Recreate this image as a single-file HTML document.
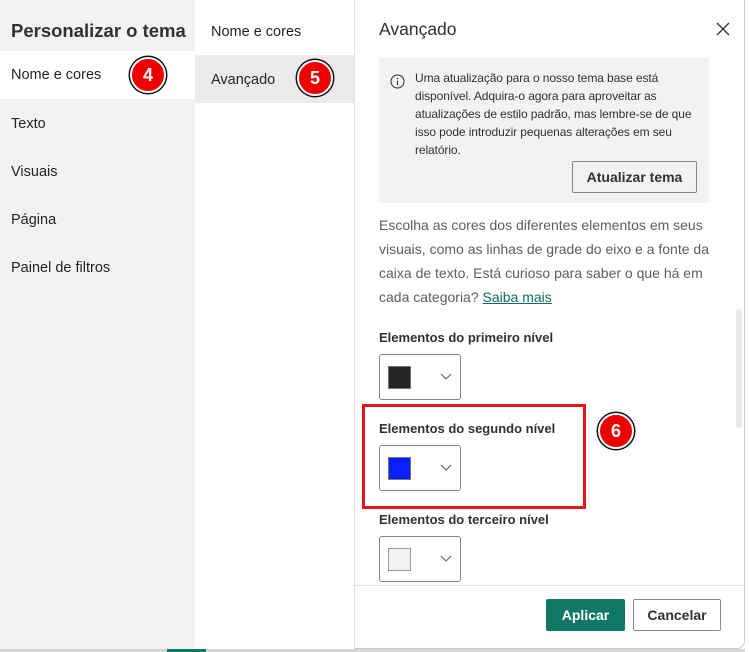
<!DOCTYPE html>
<html><head><meta charset="utf-8"><style>
*{margin:0;padding:0;box-sizing:border-box}
body{width:750px;height:652px;overflow:hidden;background:#fff;font-family:"Liberation Sans",sans-serif;color:#252423;position:relative}
.a{position:absolute;white-space:nowrap}
.badge{position:absolute;width:36px;height:36px;border-radius:50%;background:#e00;border:2px solid #fff;box-shadow:0 0 0 1.5px #111;color:#fff;font-weight:bold;font-size:18px;text-align:center;line-height:32px}
.pick{position:absolute;left:379px;width:82px;height:46px;border:1px solid #8a8886;border-radius:3px;background:#fff}
.pick .sw{position:absolute;left:8px;top:11px;width:23px;height:23px;border:1px solid #777}
.pick svg{position:absolute;left:60px;top:18px}
.lbl{position:absolute;left:379px;font-size:13px;font-weight:bold;color:#323130}
.nav{font-size:14.5px}
</style></head><body>
<div class="a" style="left:0;top:0;width:195px;height:649px;background:#f3f2f1"></div>
<div class="a" style="left:0;top:51px;width:195px;height:48px;background:#fff"></div>
<div class="a" style="left:11px;top:20px;font-size:18.5px;font-weight:bold;color:#323130">Personalizar o tema</div>
<div class="a nav" style="left:11px;top:67px">Nome e cores</div>
<div class="a nav" style="left:11px;top:116px">Texto</div>
<div class="a nav" style="left:11px;top:164px">Visuais</div>
<div class="a nav" style="left:11px;top:212px">Página</div>
<div class="a nav" style="left:11px;top:260px">Painel de filtros</div>
<div class="badge" style="left:130px;top:57px">4</div>

<div class="a" style="left:195px;top:0;width:160px;height:649px;background:#fff;border-right:1px solid #e1dfdd"></div>
<div class="a" style="left:195px;top:55px;width:159px;height:48px;background:#edebe9"></div>
<div class="a nav" style="left:211px;top:24px">Nome e cores</div>
<div class="a nav" style="left:211px;top:72px">Avançado</div>
<div class="badge" style="left:297px;top:60px">5</div>

<div class="a" style="left:355px;top:0;width:390px;height:649px;border-right:1px solid #d0d0d0;border-bottom:1px solid #c8c8c8;border-bottom-right-radius:8px"></div>
<div class="a" style="left:379px;top:19px;font-size:17.5px;color:#323130">Avançado</div>
<svg class="a" style="left:716px;top:22px" width="14" height="14"><path d="M1 1L13 13M13 1L1 13" stroke="#323130" stroke-width="1.3"/></svg>

<div class="a" style="left:379px;top:58px;width:330px;height:145px;background:#f3f2f1"></div>
<svg class="a" style="left:390px;top:74px" width="15" height="15"><circle cx="7.5" cy="7.5" r="6.5" fill="none" stroke="#323130"/><path d="M7.5 6.5V11" stroke="#323130"/><circle cx="7.5" cy="4.5" r=".8" fill="#323130"/></svg>
<div class="a" style="left:415px;top:69px;font-size:12px;line-height:18px;color:#323130;letter-spacing:-0.1px">Uma atualização para o nosso tema base está<br>disponível. Adquira-o agora para aproveitar as<br>atualizações de estilo padrão, mas lembre-se de que<br>isso pode introduzir pequenas alterações em seu<br>relatório.</div>
<div class="a" style="left:572px;top:161px;width:125px;height:32px;border:1px solid #8a8886;border-radius:2px;background:#f3f2f1;font-size:14px;font-weight:bold;text-align:center;line-height:30px;color:#323130">Atualizar tema</div>

<div class="a" style="left:379px;top:213px;font-size:14px;line-height:24px;color:#605e5c">Escolha as cores dos diferentes elementos em seus<br>visuais, como as linhas de grade do eixo e a fonte da<br>caixa de texto. Está curioso para saber o que há em<br>cada categoria? <span style="color:#0e6f5c;text-decoration:underline">Saiba mais</span></div>

<div class="lbl" style="top:330px">Elementos do primeiro nível</div>
<div class="pick" style="top:354px"><div class="sw" style="background:#252423"></div><svg width="12" height="8"><path d="M1 1L6 6L11 1" fill="none" stroke="#605e5c"/></svg></div>
<div class="lbl" style="top:421px">Elementos do segundo nível</div>
<div class="pick" style="top:445px"><div class="sw" style="background:#0a1fff"></div><svg width="12" height="8"><path d="M1 1L6 6L11 1" fill="none" stroke="#605e5c"/></svg></div>
<div class="a" style="left:362px;top:404px;width:224px;height:105px;border:3px solid #e8141c"></div>
<div class="badge" style="left:598px;top:413px">6</div>
<div class="lbl" style="top:512px">Elementos do terceiro nível</div>
<div class="pick" style="top:536px"><div class="sw" style="background:#f3f2f1;border-color:#999"></div><svg width="12" height="8"><path d="M1 1L6 6L11 1" fill="none" stroke="#605e5c"/></svg></div>

<div class="a" style="left:736px;top:309px;width:6px;height:119px;border-radius:3px;background:#e8e8e8"></div>
<div class="a" style="left:355px;top:585px;width:389px;height:1px;background:#e1dfdd"></div>
<div class="a" style="left:546px;top:599px;width:79px;height:32px;background:#117865;border-radius:2px;color:#fff;font-size:14px;font-weight:bold;text-align:center;line-height:32px">Aplicar</div>
<div class="a" style="left:633px;top:599px;width:88px;height:32px;border:1px solid #8a8886;border-radius:2px;font-size:14px;font-weight:bold;text-align:center;line-height:30px;color:#323130">Cancelar</div>
<div class="a" style="left:0;top:649px;width:745px;height:3px;background:#d6d6d6"></div>
<div class="a" style="left:167px;top:649px;width:39px;height:3px;background:#117865"></div>
</body></html>
